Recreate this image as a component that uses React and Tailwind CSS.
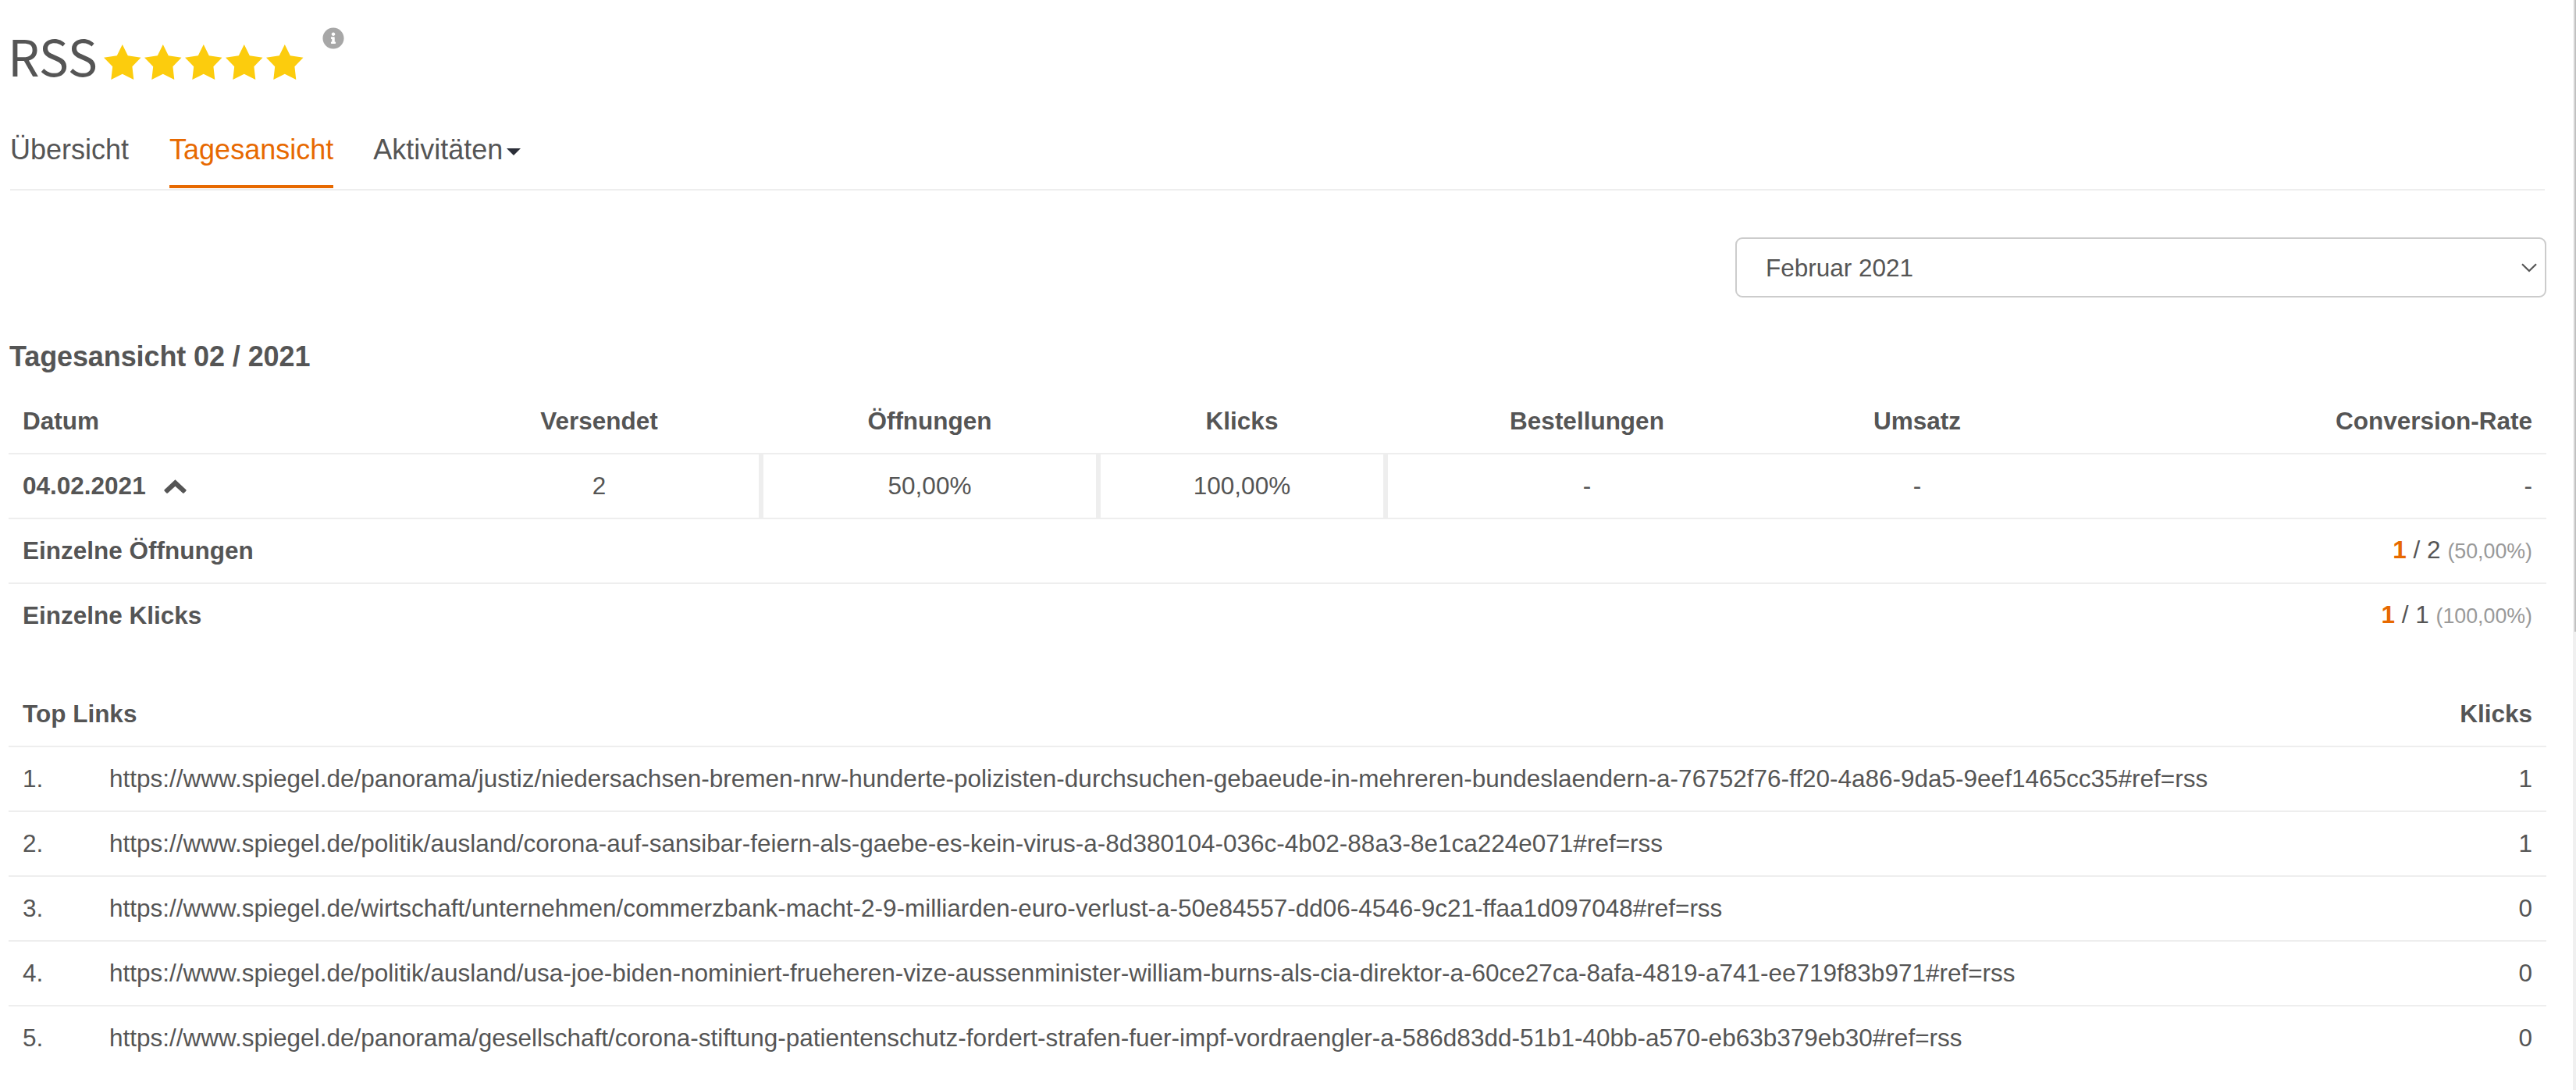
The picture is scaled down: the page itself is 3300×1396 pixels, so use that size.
import React from "react";
import { FaInfoCircle } from "react-icons/fa";

const columns = ["Datum", "Versendet", "Öffnungen", "Klicks", "Bestellungen", "Umsatz", "Conversion-Rate"];

const headerAlign = [
  "pl-[18px]",
  "pr-[6px] text-center",
  "pr-[6px] text-center",
  "pr-[6px] text-center",
  "text-center",
  "text-center",
  "pr-[18px] text-right",
];

const links = [
  ["https://www.spiegel.de/panorama/justiz/niedersachsen-bremen-nrw-hunderte-polizisten-durchsuchen-gebaeude-in-mehreren-bundeslaendern-a-76752f76-ff20-4a86-9da5-9eef1465cc35#ref=rss", 1],
  ["https://www.spiegel.de/politik/ausland/corona-auf-sansibar-feiern-als-gaebe-es-kein-virus-a-8d380104-036c-4b02-88a3-8e1ca224e071#ref=rss", 1],
  ["https://www.spiegel.de/wirtschaft/unternehmen/commerzbank-macht-2-9-milliarden-euro-verlust-a-50e84557-dd06-4546-9c21-ffaa1d097048#ref=rss", 0],
  ["https://www.spiegel.de/politik/ausland/usa-joe-biden-nominiert-frueheren-vize-aussenminister-william-burns-als-cia-direktor-a-60ce27ca-8afa-4819-a741-ee719f83b971#ref=rss", 0],
  ["https://www.spiegel.de/panorama/gesellschaft/corona-stiftung-patientenschutz-fordert-strafen-fuer-impf-vordraengler-a-586d83dd-51b1-40bb-a570-eb63b379eb30#ref=rss", 0],
];

const gridCols = "grid grid-cols-[552px_415px_432px_368px_510px_336px_638px]";

function Star() {
  return (
    <svg className="h-[45px] w-[48px]" viewBox="0 0 48 45" fill="#fccc0d">
      <path d="M23.8 0 L30.8 14.2 L47.5 16.8 L36.4 28.3 L38.3 45 L23.8 37.8 L9.3 45 L11.2 28.3 L0 16.8 L16.8 14.2 Z" />
    </svg>
  );
}

function ChevronUp() {
  return (
    <svg className="ml-[23px] h-[18px] w-[29px]" viewBox="0 0 29 18">
      <path d="M14.5 0.3 L28.4 13.2 Q29 14 28.4 14.7 L25.7 17.4 Q24.9 18 24.1 17.4 L14.5 8.8 L4.9 17.4 Q4.1 18 3.3 17.4 L0.6 14.7 Q0 14 0.6 13.2 Z" fill="#555555" />
    </svg>
  );
}

function SummaryRow({ label, part, total, rate }) {
  return (
    <div className="flex h-[83px] items-center justify-between border-t-2 border-[#eeeeee] px-[18px]">
      <span className="font-bold">{label}</span>
      <span>
        <b className="text-[#e76900]">{part}</b> / {total} <span className="text-[26.775px] text-[#999999]">({rate})</span>
      </span>
    </div>
  );
}

export default function App() {
  return (
    <div className="flex h-[1396px] w-[3300px] justify-between overflow-hidden bg-white font-['Liberation_Sans',Arial,sans-serif] text-[31.5px] leading-[45px] text-[#555555]">
      <main className="w-[3262px] pl-[11px]">
        <header className="flex h-[152px] items-start">
          <h1 className="mt-[23px] -ml-[1px] font-['Noto_Sans_CJK_SC',sans-serif] text-[64px] leading-[94px]">RSS</h1>
          <div className="mt-[57px] ml-[8px] flex gap-[4px]">
            {[1, 2, 3, 4, 5].map((n) => <Star key={n} />)}
          </div>
          <FaInfoCircle className="mt-[35px] ml-[24px] size-[28px] text-[#a7a7a7]" />
        </header>

        <nav className="mr-[2px] ml-[2px] flex h-[92px] border-b-2 border-[#eeeeee] text-[36px] leading-[50px]">
          <a className="mt-[15px]">Übersicht</a>
          <a className="mt-[15px] ml-[52px] h-[74px] border-b-4 border-[#e76900] text-[#e76900]">Tagesansicht</a>
          <a className="mt-[15px] ml-[51px] flex">
            Aktivitäten
            <svg className="mt-[23px] ml-[5px] h-[9px] w-[18px]" viewBox="0 0 18 9"><path d="M0 0H18L9 9Z" fill="#2b2e38" /></svg>
          </a>
        </nav>

        <div className="mt-[60px] ml-auto flex h-[77px] w-[1039px] items-center justify-between rounded-[9px] border-2 border-[#cccccc] pr-[10px] pl-[37px]">
          <span className="pt-[1px]">Februar 2021</span>
          <svg className="h-[12px] w-[20px]" viewBox="0 0 20 12" fill="none"><path d="M1 1.2L10 10L19 1.2" stroke="#555555" strokeWidth="2.2" /></svg>
        </div>

        <h2 className="mt-[51px] ml-[1px] text-[36px] leading-[50px] font-bold tracking-[-0.1px]">Tagesansicht 02 / 2021</h2>

        <section className="mt-[16px]">
          <div className={gridCols + " h-[82px] items-center font-bold"}>
            {columns.map((c, i) => (
              <div key={c} className={headerAlign[i]}>{c}</div>
            ))}
          </div>
          <div className={gridCols + " h-[83px] border-t-2 border-[#eeeeee] leading-[81px]"}>
            <div className="flex items-center pl-[18px] font-bold">04.02.2021<ChevronUp /></div>
            <div className="border-r-6 border-[#eeeeee] text-center">2</div>
            <div className="border-r-6 border-[#eeeeee] text-center">50,00%</div>
            <div className="border-r-6 border-[#eeeeee] text-center">100,00%</div>
            <div className="text-center">-</div>
            <div className="text-center">-</div>
            <div className="pr-[18px] text-right">-</div>
          </div>
          <SummaryRow label="Einzelne Öffnungen" part="1" total="2" rate="50,00%" />
          <SummaryRow label="Einzelne Klicks" part="1" total="1" rate="100,00%" />
        </section>

        <section className="mt-[44px]">
          <div className="flex h-[82px] items-center justify-between px-[18px] font-bold">
            <span>Top Links</span>
            <span>Klicks</span>
          </div>
          {links.map(([url, clicks], i) => (
            <div key={url} className="flex h-[83px] items-center border-t-2 border-[#eeeeee] px-[18px]">
              <span className="w-[111px]">{i + 1}.</span>
              <span className="flex-1 whitespace-nowrap">{url}</span>
              <span>{clicks}</span>
            </div>
          ))}
        </section>
      </main>

      <div className="w-[4px] bg-[#f0f0f0] pl-[2px]">
        <div className="h-[809px] bg-[#c1c1c1]" />
      </div>
    </div>
  );
}
